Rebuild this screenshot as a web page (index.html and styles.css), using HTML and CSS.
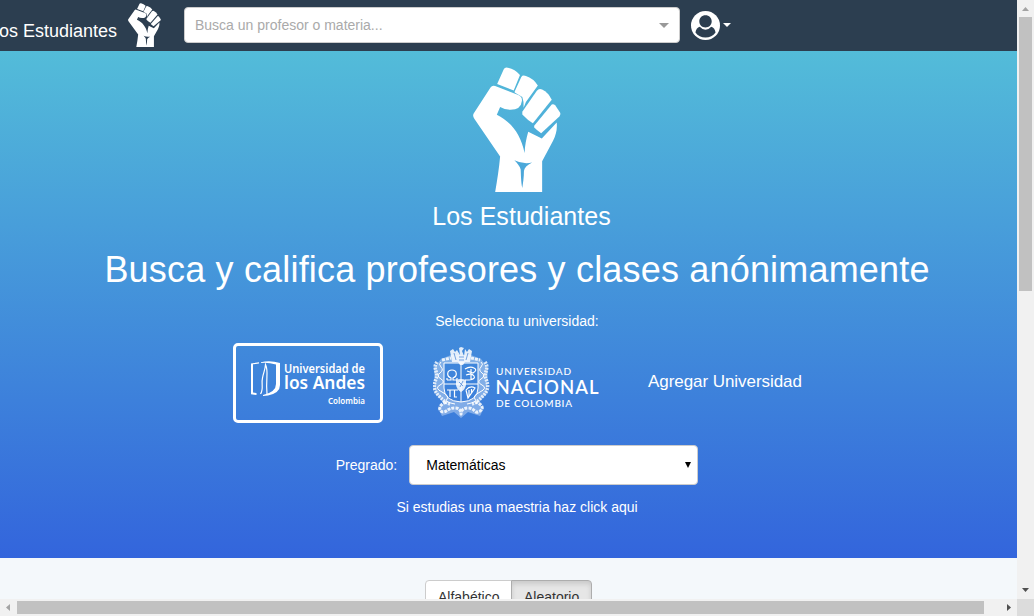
FILE: index.html
```html
<!DOCTYPE html>
<html lang="es">
<head>
<meta charset="utf-8">
<title>Los Estudiantes</title>
<link rel="stylesheet" href="styles.css">
</head>
<body>
<svg class="defs" width="0" height="0">
  <symbol id="fist" viewBox="38 22 266 374" preserveAspectRatio="none">
    <path d="M111 73 L131 29 Q134 22 143 24 Q165 28 180 46 L161 92Z"/>
    <path d="M164 95 L184 52 Q188 45 198 49 Q220 56 234 77 L198 127 L191 144 Q192 125 187 112 L164 98Z"/>
    <path d="M187 156 L231 93 Q237 85 247 89 Q266 98 276 120 L219 190 Q203 181 187 164Z"/>
    <path d="M223 198 L276 134 Q282 132 287 137 L302 160 Q303 165 299 170 L244 220 Q232 212 223 203Z"/>
    <path fill-rule="evenodd" d="M40 161 L91 83 Q96 76 105 79 L175 106 Q187 111 186 123 Q183 150 151 150 Q133 150 120 142 L110 165 C154 187 182 222 194 279 C195 257 199 235 205 216 L246 236 L291 188 Q294 216 280 243 L247 304 V396 H105 C111 362 117 325 120 290 L42 177 Q36 169 40 161Z M163 301 Q189 314 217 308 C201 316 193 324 192 333 C192 352 189 370 187 384 C183 367 183 343 182 328 C180 319 171 309 163 301Z"/>
  </symbol>
</svg>
<div class="window">
  <div class="page">
    <header class="navbar">
      <span class="brand">Los Estudiantes</span>
      <svg class="brand-fist"><use href="#fist"/></svg>
      <div class="search"><span>Busca un profesor o materia...</span><i class="search-arrow"></i></div>
      <svg class="user" viewBox="0 0 28 28">
        <circle cx="14" cy="14" r="14" fill="#fff"/>
        <path fill="#2c3e50" d="M14 4c3.500 0 6 2.500 6 6S17.500 16 14 16 8 13.500 8 10 10.500 4 14 4Z M8.500 15.200Q10.800 18 14 18T19.500 15.200C22 15.600 23.300 18 23.700 20.700C21.400 24 18 25.500 14 25.500S6.600 24 4.300 20.700C4.700 18 6 15.600 8.500 15.200Z"/>
      </svg>
      <i class="user-caret"></i>
    </header>
    <section class="hero">
      <svg class="hero-fist"><use href="#fist"/></svg>
      <div class="hero-name">Los Estudiantes</div>
      <h1>Busca y califica profesores y clases anónimamente</h1>
      <p class="choose">Selecciona tu universidad:</p>
      <div class="universities">
        <div class="university selected">
          <svg width="144" height="74" viewBox="0 0 144 74">
            <path fill="#fff" d="M15 17.500 23 16.200V17.500L17 18.300V46.500L20.500 47V49L15 48.200Z M25 16.200Q34 14 44 17V39Q44 47 32 49.500L27 50V49Q40 46 40 38V18.500Q32 16.300 25 17Z"/>
            <path fill="none" stroke="#fff" stroke-width="1.200" d="M24.500 48C28 43 25 38 26.500 32C27.500 26 29 25 29.500 18.500C33 26 29.500 31 31 48"/>
            <g class="andes" text-anchor="end">
              <text x="129" y="26.500" font-size="12" textLength="81" lengthAdjust="spacingAndGlyphs">Universidad de</text>
              <text x="129" y="43" font-size="17" textLength="81" lengthAdjust="spacingAndGlyphs">los Andes</text>
              <text x="129" y="58" font-size="8.500" textLength="37" lengthAdjust="spacingAndGlyphs">Colombia</text>
            </g>
          </svg>
        </div>
        <svg class="nacional" width="166" height="72" viewBox="0 0 166 72">
          <g fill="#fff" opacity=".35">
            <path fill-rule="evenodd" d="M18 8L8 12L1 21L2 46L12 57L28 60L44 57L54 46L55 21L48 12L38 8Z M11 16V41Q11 54 28 55Q45 54 45 41V16Z"/>
            <path d="M12 55L5 61L9 69L21 65L28 71L35 65L47 69L51 61L44 55L28 59Z"/>
          </g>
          <g fill="none" stroke="#fff" stroke-width="1">
            <path d="M11 16H45V41Q45 54 28 55Q11 54 11 41Z M28 16V55 M11 37H45"/>
            <path d="M8 15Q5 17 8 20T7 26T8 32T7 38T9 45T14 52T22 57 M48 15Q51 17 48 20T49 26T48 32T49 38T47 45T42 52T34 57"/>
            <path stroke-width="3.500" stroke-dasharray="2 1" opacity=".8" d="M4 15C-1 22 6 25 3 32S1 44 6 49S13 56 17 57 M52 15C57 22 50 25 53 32S55 44 50 49S43 56 39 57"/>
            <path stroke-width="3" stroke-dasharray="3 1" opacity=".85" d="M9 13L18 11 M38 11L47 13 M13 55C3 59 7 66 11 65S15 61 22 61S28 68 28 67S28 61 35 61S41 66 45 65S53 59 43 55"/>
            <path stroke-width="1.200" d="M14 33H18V31C13 29 14 23 19 23S25 29 20 31V33H24 M14 33V31 M24 33V31 M32 22Q37 19 41 21T40 26L34 24 M33 28Q39 26 41 29T36 33H32 M38 22V33 M14 43H25 M17 43V50 M21.500 43V50H24 M33 43L35 51L42 41Q37 38 33 43 M36 43V50 M38.500 42V46"/>
          </g>
          <path fill="#fff" opacity=".85" d="M17 4L19 15H25L27 18H30L32 15H37L39 4L36 2L34 5L32 2L31 9L29 4L31 1L28 0L26 1L27 8L24 3L22 5L20 2Z M23 33Q28 31 33 33V38Q32 43 28 45Q24 43 23 38Z"/>
          <path fill="none" stroke="#4080d6" stroke-width=".7" d="M21 6L23 13 M35 6L33 13 M26 10H31 M26 13H31 M26 35L30 39 M30 34L27 40"/>
          <g class="unal">
            <text x="63" y="28" font-size="10" font-weight="500" textLength="75">UNIVERSIDAD</text>
            <text x="62.500" y="46.500" font-size="18.500" font-weight="600" textLength="103">NACIONAL</text>
            <text x="63" y="60" font-size="10" font-weight="500" textLength="76">DE COLOMBIA</text>
          </g>
        </svg>
        <span class="add">Agregar Universidad</span>
      </div>
      <div class="program">
        <span>Pregrado:</span>
        <div class="select"><span>Matemáticas</span><i class="select-arrow"></i></div>
      </div>
      <p class="masters">Si estudias una maestria haz click aqui</p>
    </section>
    <section class="order">
      <div class="toggle"><span class="option">Alfabético</span><span class="option active">Aleatorio</span></div>
    </section>
  </div>
  <div class="vbar">
    <svg width="17" height="17"><path fill="#a3a3a3" d="M5 11 8.500 7 12 11Z"/></svg>
    <div class="vthumb"></div>
    <svg class="end" width="17" height="17"><path fill="#505050" d="M5 6H12L8.500 10Z"/></svg>
  </div>
  <div class="hbar">
    <svg width="17" height="17"><path fill="#a3a3a3" d="M10 5V12L6 8.500Z"/></svg>
    <div class="hthumb"></div>
    <svg class="end" width="17" height="17"><path fill="#505050" d="M7 5V12L11 8.500Z"/></svg>
  </div>
  <div class="corner"></div>
</div>
</body>
</html>
```
FILE: styles.css
```css
* { box-sizing: border-box; }
body { margin: 0; overflow: hidden; font-family: "Liberation Sans", Arial, sans-serif; font-size: 14px; line-height: 20px; color: #fff; }
svg { display: block; flex: none; }
p, h1 { margin: 0; font-weight: 400; }
.defs { position: absolute; }
.window { display: grid; grid-template: 599px 17px / 1017px 17px; width: 1034px; height: 616px; }
.page { overflow: hidden; background: #f4f8fb; }
.navbar { display: flex; align-items: flex-start; width: 1034px; height: 51px; background: #2c3e50; }
.brand { flex: none; width: 128px; margin-left: -11px; padding-top: 21px; font-size: 18px; white-space: nowrap; }
.brand-fist { width: 33px; height: 44px; margin: 3px 0 0 11px; fill: #fff; }
.search { display: flex; align-items: center; justify-content: space-between; width: 496px; height: 36px; margin: 7px 0 0 23px; padding: 0 10px; border: 1px solid #ccc; border-radius: 4px; background: #fff; color: #aaa; }
.search-arrow { border: solid transparent; border-width: 5px 5px 0; border-top-color: #999; }
.user { width: 29px; height: 29px; margin: 11px 0 0 11px; }
.user-caret { margin: 23px 0 0 3px; border: solid transparent; border-width: 4px 4px 0; border-top-color: #fff; }
.hero { display: flex; flex-direction: column; align-items: center; width: 1034px; height: 507px; padding-top: 16px; background: linear-gradient(#53bcd9, #3365dc); }
.hero-fist { width: 88px; height: 125px; fill: #fff; }
.hero-name { margin-top: 10px; padding-left: 9px; font-size: 25px; line-height: 28px; letter-spacing: .05px; }
h1 { margin-top: 20px; font-size: 36px; line-height: 40px; letter-spacing: .18px; white-space: nowrap; }
.choose { margin-top: 21px; }
.universities { display: flex; width: 568px; height: 80px; margin-top: 12px; }
.university { width: 150px; height: 80px; border: 3px solid #fff; border-radius: 5px; }
.andes { fill: #fff; font-family: "Noto Sans", sans-serif; font-weight: 600; }
.nacional { margin: 4px 0 0 50px; }
.unal { fill: #fff; font-family: Lato, sans-serif; }
.add { margin: 29px 0 0 49px; font-size: 17px; letter-spacing: -.06px; white-space: nowrap; }
.program { display: flex; align-items: center; gap: 12px; margin-top: 22px; }
.select { display: flex; align-items: center; justify-content: space-between; width: 289px; height: 40px; padding: 0 6px 0 16px; border: 1px solid #ccc; border-radius: 4px; background: #fff; color: #000; }
.select-arrow { border: solid transparent; border-width: 6px 3.5px 0; border-top-color: #000; }
.masters { margin-top: 12px; }
.order { display: flex; justify-content: center; width: 1034px; padding-top: 22px; }
.toggle { display: flex; width: 167px; height: 34px; margin-right: 17px; color: #333; }
.option { width: 87px; padding: 6px 0 0 12px; border: 1px solid #ccc; border-radius: 4px 0 0 4px; background: #fff; }
.active { width: 81px; margin-left: -1px; border-color: #adadad; border-radius: 0 4px 4px 0; background: #e6e6e6; box-shadow: inset 0 3px 5px rgba(0, 0, 0, .125); }
.vbar { display: flex; flex-direction: column; background: #f1f1f1; }
.vthumb { width: 13px; height: 274px; margin-left: 2px; background: #c1c1c1; }
.hbar { display: flex; background: #f1f1f1; }
.hthumb { width: 967px; height: 13px; margin-top: 2px; background: #c1c1c1; }
.vbar .end { margin-top: auto; }
.hbar .end { margin-left: auto; }
.corner { background: #dcdcdc; }
```
